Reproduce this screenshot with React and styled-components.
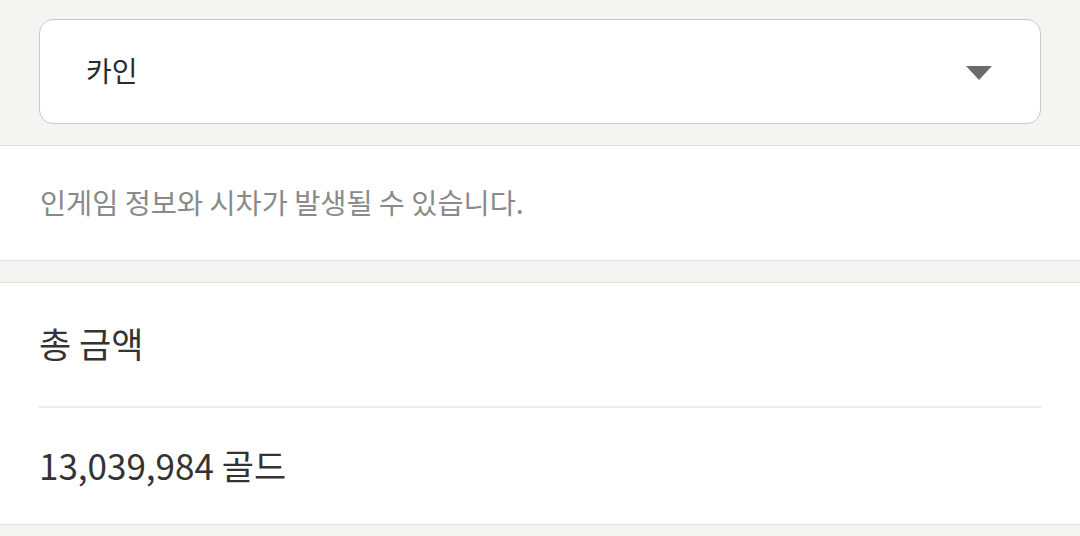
import React from "react";
import styled, { createGlobalStyle } from "styled-components";

const Global = createGlobalStyle`
  html, body { margin: 0; padding: 0; background: #f4f4f2; }
  body { font-family: "Noto Sans CJK KR", "Noto Sans", sans-serif; color: #333; }
`;

const Page = styled.div`
  display: flex;
  flex-direction: column;
  width: 1080px;
`;

const TopArea = styled.div`
  padding: 19px 39px 21px 39px;
  border-bottom: 1px solid #e2e2e0;
`;

const Select = styled.div`
  box-sizing: border-box;
  height: 105px;
  background: #fff;
  border: 1px solid #c9c9c7;
  border-radius: 14px;
  display: flex;
  align-items: center;
  justify-content: space-between;
  padding: 0 48px 0 46px;
`;

const SelectText = styled.span`
  font-size: 28px;
  color: #2b2b2b;
  line-height: 1;
  margin-top: -4px;
`;

const Caret = styled.svg`
  width: 26px;
  height: 14px;
  margin-top: 2px;
`;

const Notice = styled.div`
  background: #fff;
  height: 114px;
  display: flex;
  align-items: center;
  padding: 0 40px;
  border-bottom: 1px solid #e2e2e0;
`;

const NoticeText = styled.span`
  font-size: 28.4px;
  color: #8a8a8a;
  margin-top: -4px;
`;

const Gap = styled.div`
  height: 21px;
  border-bottom: 1px solid #e2e2e0;
`;

const Card = styled.div`
  background: #fff;
  padding: 0 39px;
  border-bottom: 1px solid #e2e2e0;
`;

const Row = styled.div`
  height: ${(p) => p.$h}px;
  display: flex;
  align-items: center;
  border-bottom: ${(p) => (p.$divider ? "2px solid #ececea" : "none")};
`;

const BigText = styled.span`
  font-size: 35px;
  color: #333;
  margin-top: -4px;
`;

export default function App() {
  return (
    <>
      <Global />
      <Page>
        <TopArea>
          <Select>
            <SelectText>카인</SelectText>
            <Caret viewBox="0 0 26 14">
              <path d="M0 0 H26 L13 14 Z" fill="#6b6b6b" />
            </Caret>
          </Select>
        </TopArea>
        <Notice>
          <NoticeText>인게임 정보와 시차가 발생될 수 있습니다.</NoticeText>
        </Notice>
        <Gap />
        <Card>
          <Row $h={123} $divider>
            <BigText>총 금액</BigText>
          </Row>
          <Row $h={116}>
            <BigText>13,039,984 골드</BigText>
          </Row>
        </Card>
      </Page>
    </>
  );
}
